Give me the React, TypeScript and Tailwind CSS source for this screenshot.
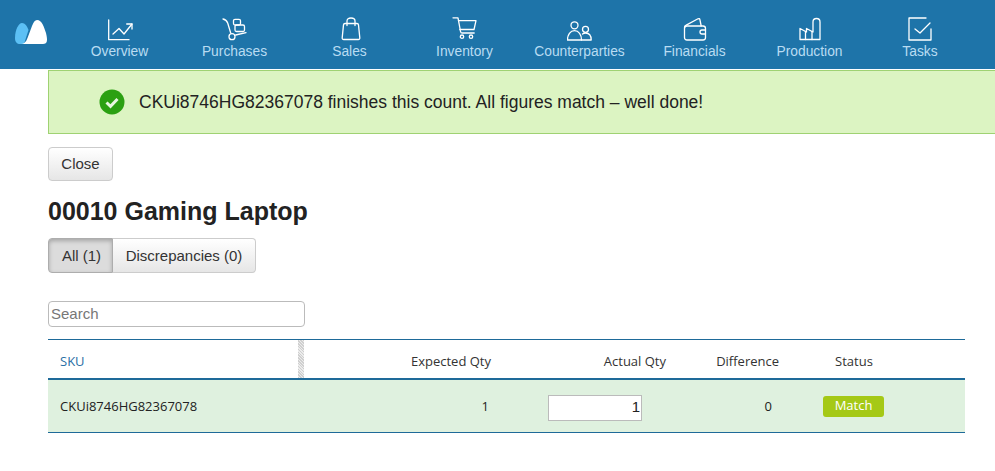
const navItems = [
  {
    label: "Overview",
    icon: (
      <>
        <path d="M1.700 3v19.700H22" />
        <path d="M6 17l6-5.500 5 5.500 8-10" />
        <path d="M19.700 7H25v5" />
      </>
    ),
  },
  {
    label: "Purchases",
    icon: (
      <>
        <path d="M1 2c2.500.6 3.800 1.800 4.700 4l3 10" />
        <circle cx="10" cy="19.700" r="3" />
        <path d="M13.700 18L24 15.700" />
        <rect x="11.500" y="2.300" width="7" height="5.700" rx="1.500" />
        <rect x="13" y="8" width="9.500" height="6.500" rx="1.500" />
      </>
    ),
  },
  {
    label: "Sales",
    icon: (
      <>
        <path d="M8 6.500h12c.9 0 1.400.5 1.500 1.400l1.300 13c.1 1.100-.5 1.600-1.500 1.600H6.700c-1 0-1.600-.5-1.500-1.600l1.300-13c.1-.9.6-1.400 1.500-1.400z" />
        <path d="M10 8.500V4c0-2 1.500-3 4-3s4 1 4 3v4.500" />
      </>
    ),
  },
  {
    label: "Inventory",
    icon: (
      <>
        <path d="M1 .8h5l2.500 13.500c.2 1.200.7 1.700 1.700 1.700h12" />
        <path d="M6.500 3.700H24l-2 8.800H7.800" />
        <circle cx="10" cy="19.700" r="1.700" />
        <circle cx="19" cy="19.700" r="1.700" />
      </>
    ),
  },
  {
    label: "Counterparties",
    icon: (
      <>
        <circle cx="7.500" cy="8.300" r="3.500" />
        <path d="M.5 23c0-5.500 2.800-9.300 7-9.300s7 3.800 7 9.300z" />
        <circle cx="18.500" cy="12.300" r="3" />
        <path d="M15.500 17c.9-.7 1.900-1 3-1 3.600 0 5.700 2.800 5.700 7h-9.700" />
      </>
    ),
  },
  {
    label: "Financials",
    icon: (
      <>
        <path d="M2.500 10.500c0-1 .5-1.700 1.300-2.100L16 1.800c1-.5 1.700-.1 1.900.9l1.300 6.300" />
        <path d="M5 9h16c1.600 0 2.500.9 2.500 2.500v9c0 1.600-.9 2.500-2.500 2.500H5c-1.600 0-2.500-.9-2.500-2.500v-9C2.500 9.900 3.400 9 5 9z" />
        <path d="M23.500 13H20a2 2 0 000 4h3.500" />
      </>
    ),
  },
  {
    label: "Production",
    icon: (
      <>
        <path d="M3 22.500V11.500l6.500 3.500v-3.500l6.500 3.500V5c0-2.200 1.200-3.500 3.500-3.500S23 2.800 23 5v17.500z" />
        <path d="M8.500 14.500v8" />
        <path d="M15 14.500v8" />
      </>
    ),
  },
  {
    label: "Tasks",
    icon: (
      <>
        <path d="M19 1H2v22h22V12" />
        <path d="M8 12l5 4 10-10" />
      </>
    ),
  },
];

function Logo() {
  return (
    <svg width="32" height="24" viewBox="0 0 32 24" className="shrink-0">
      <path d="M0 18C0 10 3.500 3 7 3c3 0 5 3 6.500 7L9 24H5c-3 0-5-2-5-6z" fill="#5cc0f5" />
      <path d="M6 24c3 0 5-2 6.500-6L17 6c1.500-4 3-6 5-6 5 0 7 7 9 13 1 4 1 6 1 7 0 3-2 4-4 4z" fill="#ffffff" />
    </svg>
  );
}

export default function App() {
  return (
    <div className="min-h-screen bg-white font-['Liberation_Sans',Arial,sans-serif] text-[#222]">
      <header className="flex h-[69px] bg-[#1e74a9]">
        <div className="flex w-[62px] items-start pt-[20px] pl-[15px]">
          <Logo />
        </div>
        <nav className="flex">
          {navItems.map((item) => (
            <div
              key={item.label}
              className={`flex flex-col items-center pt-[17px] ${item.label === "Tasks" ? "w-[106px]" : "w-[115px]"}`}
            >
              <svg
                width="26"
                height="25"
                viewBox="0 0 26 25"
                fill="none"
                stroke="#ffffff"
                strokeWidth="1.300"
                strokeLinecap="round"
                strokeLinejoin="round"
              >
                {item.icon}
              </svg>
              <span className="mt-[2px] text-[13.800px] leading-[16px] whitespace-nowrap text-[#b9dcf2]">{item.label}</span>
            </div>
          ))}
        </nav>
      </header>

      <main className="pl-[48px]">
        <div className="mt-[1px] flex h-[64px] items-center border-y border-l border-[#9fd272] bg-[#dcf4c2] pl-[50px]">
          <svg width="26" height="26" viewBox="0 0 26 26">
            <circle cx="13" cy="13" r="12.500" fill="#2ba012" />
            <path d="M7.500 13.500l4 3.800 7-7.300" fill="none" stroke="#e8f6e0" strokeWidth="3" />
          </svg>
          <span className="ml-[14px] text-[17.500px] leading-[20px] text-[#222]">
            CKUi8746HG82367078 finishes this count. All figures match – well done!
          </span>
        </div>

        <button className="mt-[13px] block h-[34px] w-[65px] rounded-[4px] border border-[#ccc] bg-gradient-to-b from-white to-[#e6e6e6] text-[15px] text-[#333]">
          Close
        </button>

        <h1 className="mt-[15px] text-[25px] leading-[31px] font-bold text-[#222]">00010 Gaming Laptop</h1>

        <div className="mt-[11px] flex h-[35px] w-[208px] text-[15px] text-[#333]">
          <div className="flex w-[65px] items-center justify-center rounded-l-[4px] border border-[#adadad] bg-[#dcdcdc] pt-[2px] pl-[2px] shadow-[inset_0_2px_4px_rgba(0,0,0,0.25)]">
            All (1)
          </div>
          <div className="flex flex-1 items-center justify-center rounded-r-[4px] border border-l-0 border-[#ccc] bg-gradient-to-b from-white to-[#e6e6e6] pt-[2px]">
            Discrepancies (0)
          </div>
        </div>

        <input
          readOnly
          placeholder="Search"
          className="mt-[28px] block h-[26px] w-[257px] rounded-[4px] border border-[#bbb] px-[2px] pb-[2px] text-[15px] outline-none placeholder:text-[#777]"
        />

        <div className="mt-[12px] w-[917px] border-t border-[#1e6a99] font-['Open_Sans',sans-serif] text-[13px]">
          <div className="flex h-[38px] items-stretch">
            <div className="flex w-[250px] items-center pt-[5px] pl-[12px] text-[#2a6fa5]">SKU</div>
            <div className="w-[6px] bg-[repeating-linear-gradient(45deg,#cfcfcf_0,#cfcfcf_1px,#ececec_1px,#ececec_2px)]" />
            <div className="flex w-[187px] items-center justify-end pt-[5px] text-[#333]">Expected Qty</div>
            <div className="flex w-[175px] items-center justify-end pt-[5px] text-[#333]">Actual Qty</div>
            <div className="flex w-[113px] items-center justify-end pt-[5px] text-[#333]">Difference</div>
            <div className="flex w-[150px] items-center justify-center pt-[5px] text-[#333]">Status</div>
          </div>
          <div className="flex h-[54px] items-center border-t-2 border-[#1e6a99] bg-[#dff1df]">
            <div className="w-[255px] pt-[2px] pl-[12px] text-[#222]">CKUi8746HG82367078</div>
            <div className="w-[186px] pt-[2px] text-right text-[#222]">1</div>
            <div className="mt-[3px] ml-[59px] flex h-[26px] w-[94px] items-center justify-end border border-[#bbb] bg-white pr-[1px] font-['Liberation_Sans',sans-serif] text-[15px] text-[#222]">
              1
            </div>
            <div className="w-[134px] pt-[2px] pr-[4px] text-right text-[#222]">0</div>
            <div className="ml-[47px] flex h-[21px] w-[61px] items-center justify-center rounded-[3px] bg-[#a5c916] text-white">Match</div>
          </div>
          <div className="border-t border-[#1e6a99]" />
        </div>
      </main>
    </div>
  );
}
